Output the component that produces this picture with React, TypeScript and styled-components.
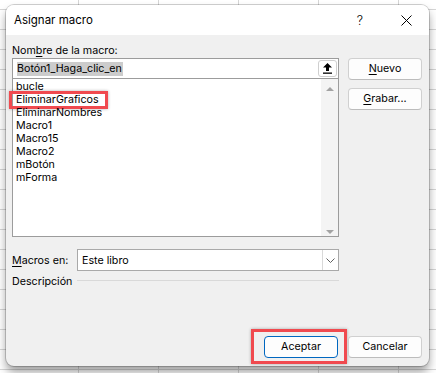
import React from 'react';
import styled, { createGlobalStyle } from 'styled-components';

const GlobalStyle = createGlobalStyle`
  html, body {
    margin: 0;
    padding: 0;
  }
  body {
    width: 436px;
    height: 373px;
    overflow: hidden;
    background-color: #ffffff;
    background-image:
      linear-gradient(to right, #d6d6d6 1px, transparent 1px),
      linear-gradient(to bottom, #d6d6d6 1px, transparent 1px);
    background-size: 80px 20px;
    background-position: -2px 9px;
    font-family: Inter, "Noto Sans", "DejaVu Sans", sans-serif;
    color: #000;
  }
`;

const Screen = styled.div`
  padding: 5px 0 0 6px;
`;

const Dialog = styled.div`
  width: 423px;
  height: 361px;
  display: flex;
  flex-direction: column;
  border-radius: 8px;
  overflow: hidden;
  background: #f0f0f0;
  box-shadow: 0 0 0 1px rgba(0, 0, 0, 0.18), 0 6px 10px rgba(0, 0, 0, 0.38);
`;

const TitleBar = styled.div`
  height: 30px;
  flex: none;
  display: flex;
  align-items: center;
  background: #ffffff;
  padding-left: 8px;
`;

const Title = styled.span`
  flex: 1;
  font-size: 11.5px;
  line-height: 14px;
`;

const TitleButton = styled.div`
  width: 46px;
  height: 30px;
  display: flex;
  align-items: center;
  justify-content: center;
  font-size: 12.5px;
  font-weight: 300;
`;

const Body = styled.div`
  flex: 1;
  display: flex;
  flex-direction: column;
  padding: 8px 7px 8px 6px;
  font-size: 10.7px;
`;

const Main = styled.div`
  display: flex;
  gap: 9px;
`;

const LeftCol = styled.div`
  width: 327px;
  display: flex;
  flex-direction: column;
`;

const RightCol = styled.div`
  width: 74px;
  padding-top: 15px;
  display: flex;
  flex-direction: column;
  gap: 8px;
`;

const Label = styled.div`
  height: 15px;
  line-height: 15px;
  white-space: nowrap;
`;

const Key = styled.span`
  text-decoration: underline;
  text-underline-offset: 2px;
`;

const Combo = styled.div`
  height: 179px;
  box-sizing: border-box;
  border: 1px solid #9c9c9c;
  background: #ffffff;
  display: flex;
  flex-direction: column;
`;

const InputRow = styled.div`
  height: 20px;
  box-sizing: border-box;
  border-bottom: 1px solid #9c9c9c;
  display: flex;
  align-items: center;
  padding: 0 1px 0 4px;
`;

const Selected = styled.span`
  background: #cccccc;
  line-height: 14px;
  padding: 0 1px 0 0;
`;

const UploadButton = styled.div`
  margin-left: auto;
  width: 19px;
  height: 17px;
  box-sizing: border-box;
  border: 1px solid #cfcfcf;
  border-radius: 3px;
  background: #fff;
  display: flex;
  align-items: center;
  justify-content: center;
`;

const ListArea = styled.div`
  flex: 1;
  display: flex;
`;

const Items = styled.div`
  flex: 1;
  padding: 1px 0 0 3px;
`;

const Item = styled.div`
  position: relative;
  height: 13px;
  line-height: 13px;
`;

const Highlight = styled.div<{ $l: number; $t: number; $w: number; $h: number }>`
  position: absolute;
  left: ${(p) => p.$l}px;
  top: ${(p) => p.$t}px;
  width: ${(p) => p.$w}px;
  height: ${(p) => p.$h}px;
  box-sizing: border-box;
  border: 3px solid #f04a4f;
  box-shadow: 0 0 3px rgba(0, 0, 0, 0.3);
  pointer-events: none;
`;

const Scrollbar = styled.div`
  width: 17px;
  background: #f4f4f4;
  display: flex;
  flex-direction: column;
  justify-content: space-between;
  align-items: center;
  padding: 8px 0 2px;
`;

const Arrow = styled.div<{ $down?: boolean }>`
  width: 0;
  height: 0;
  border-left: 4px solid transparent;
  border-right: 4px solid transparent;
  ${(p) =>
    p.$down
      ? 'border-top: 4px solid #a3a3a3;'
      : 'border-bottom: 4px solid #a3a3a3;'}
`;

const Button = styled.div<{ $primary?: boolean }>`
  position: relative;
  width: 74px;
  height: 22px;
  box-sizing: border-box;
  border: 1px solid ${(p) => (p.$primary ? '#0067c0' : '#d0d0d0')};
  border-bottom-color: ${(p) => (p.$primary ? '#0067c0' : '#bcbcbc')};
  border-radius: 4px;
  background: #fdfdfd;
  display: flex;
  align-items: center;
  justify-content: center;
  line-height: 14px;
`;

const FieldRow = styled.div`
  display: flex;
  align-items: center;
  margin-top: 12px;
`;

const FieldLabel = styled.div`
  width: 65px;
  line-height: 15px;
  white-space: nowrap;
`;

const Select = styled.div`
  flex: 1;
  height: 22px;
  box-sizing: border-box;
  border: 1px solid #a9a9a9;
  background: #fff;
  display: flex;
  align-items: center;
  padding-left: 4px;
`;

const SelectValue = styled.span`
  flex: 1;
`;

const Chevron = styled.div`
  width: 16px;
  height: 20px;
  box-sizing: border-box;
  border-left: 1px solid #d9d9d9;
  display: flex;
  align-items: center;
  justify-content: center;
`;

const DescRow = styled.div`
  display: flex;
  align-items: center;
  height: 14px;
  margin-top: 3px;
`;

const Rule = styled.div`
  flex: 1;
  height: 1px;
  background: #d9d9d9;
  margin-top: -1px;
`;

const Footer = styled.div`
  margin-top: auto;
  display: flex;
  justify-content: flex-end;
  gap: 10px;
`;

const macros = [
  'bucle',
  'EliminarGraficos',
  'EliminarNombres',
  'Macro1',
  'Macro15',
  'Macro2',
  'mBotón',
  'mForma',
];

export default function App() {
  return (
    <>
      <GlobalStyle />
      <Screen>
        <Dialog>
          <TitleBar>
            <Title>Asignar macro</Title>
            <TitleButton>?</TitleButton>
            <TitleButton>
              <svg width="11" height="11" viewBox="0 0 11 11">
                <path d="M0.5 0.5 L10.5 10.5 M10.5 0.5 L0.5 10.5" stroke="#000" strokeWidth="1" />
              </svg>
            </TitleButton>
          </TitleBar>
          <Body>
            <Main>
              <LeftCol>
                <Label>
                  Nom<Key>b</Key>re de la macro:
                </Label>
                <Combo>
                  <InputRow>
                    <Selected>Botón1_Haga_clic_en</Selected>
                    <UploadButton>
                      <svg width="9" height="11" viewBox="0 0 9 11">
                        <path d="M4.5 0 L9 4.5 L6 4.5 L6 8 L3 8 L3 4.5 L0 4.5 Z" fill="#000" />
                        <rect x="0" y="9.5" width="9" height="1.3" fill="#000" />
                      </svg>
                    </UploadButton>
                  </InputRow>
                  <ListArea>
                    <Items>
                      {macros.map((m) => (
                        <Item key={m}>
                          {m}
                          {m === 'EliminarGraficos' && (
                            <Highlight $l={-7} $t={-2} $w={99} $h={18} />
                          )}
                        </Item>
                      ))}
                    </Items>
                    <Scrollbar>
                      <Arrow />
                      <Arrow $down />
                    </Scrollbar>
                  </ListArea>
                </Combo>
                <FieldRow>
                  <FieldLabel>
                    <Key>M</Key>acros en:
                  </FieldLabel>
                  <Select>
                    <SelectValue>Este libro</SelectValue>
                    <Chevron>
                      <svg width="9" height="5" viewBox="0 0 9 5">
                        <path d="M0.5 0.5 L4.5 4.5 L8.5 0.5" stroke="#606060" fill="none" strokeWidth="1" />
                      </svg>
                    </Chevron>
                  </Select>
                </FieldRow>
                <DescRow>
                  <FieldLabel>Descripción</FieldLabel>
                  <Rule />
                </DescRow>
              </LeftCol>
              <RightCol>
                <Button>
                  <span>
                    <Key>N</Key>uevo
                  </span>
                </Button>
                <Button>
                  <span>
                    <Key>G</Key>rabar...
                  </span>
                </Button>
              </RightCol>
            </Main>
            <Footer>
              <Button $primary>
                Aceptar
                <Highlight $l={-14} $t={-8} $w={96} $h={35} />
              </Button>
              <Button>Cancelar</Button>
            </Footer>
          </Body>
        </Dialog>
      </Screen>
    </>
  );
}
